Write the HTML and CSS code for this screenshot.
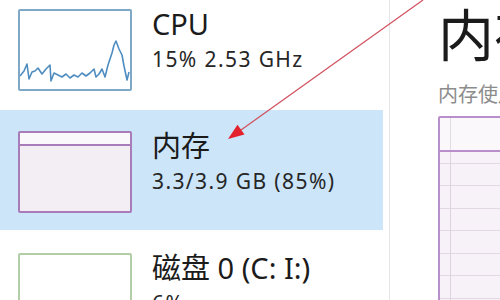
FILE: index.html
```html
<!DOCTYPE html>
<html lang="zh-CN">
<head>
    <meta charset="UTF-8">
    <meta name="viewport" content="width=device-width, initial-scale=1.0">
    <title>任务管理器 - 内存</title>
    <link rel="stylesheet" href="styles.css">
</head>
<body>
    <div class="app">
        <aside class="sidebar">
            <div class="item">
                <div class="thumb thumb-cpu">
                    <svg viewBox="0 0 110 78" width="110" height="78">
                        <polyline class="cpu-line" points="0,65 4,60 7,53 9,68 12,61 15,60 18,57 22,63 26,58 30,54 31,70 34,62 38,64 42,66 46,63 50,67 54,64 58,66 62,62 66,65 70,62 74,58 76,66 79,63 82,58 85,66 88,54 92,42 94,34 96,30 99,38 102,44 104,55 107,69 109,61"/>
                    </svg>
                </div>
                <div class="info">
                    <div class="name">CPU</div>
                    <div class="stat">15% 2.53 GHz</div>
                </div>
            </div>
            <div class="item selected">
                <div class="thumb thumb-mem">
                    <div class="mem-band"></div>
                </div>
                <div class="info">
                    <div class="name">内存</div>
                    <div class="stat">3.3/3.9 GB (85%)</div>
                </div>
            </div>
            <div class="item">
                <div class="thumb thumb-disk"></div>
                <div class="info">
                    <div class="name">磁盘 0 (C: I:)</div>
                    <div class="stat">6%</div>
                </div>
            </div>
        </aside>
        <div class="divider"></div>
        <main class="detail">
            <h1 class="title">内存</h1>
            <div class="caption">内存使用量</div>
            <div class="chart">
                <div class="chart-head"></div>
                <div class="chart-grid"></div>
            </div>
        </main>
    </div>

    <!-- annotation arrow drawn over the screenshot -->
    <svg class="arrow" width="500" height="300" viewBox="0 0 500 300">
        <line x1="423" y1="0" x2="241" y2="130" class="arrow-line"/>
        <polygon points="228,139 244.5,134.6 237.5,124.8" class="arrow-head"/>
    </svg>
</body>
</html>
```

FILE: styles.css
```css
body {
    margin: 0;
    width: 500px;
    height: 300px;
    overflow: hidden;
    background-color: #ffffff;
    color: #1b1b1b;
    font-family: "Noto Sans", "Noto Sans CJK SC", sans-serif;
    position: relative;
}
.app {
    display: flex;
    height: 300px;
}
.sidebar {
    width: 383px;
    flex: none;
    display: flex;
    flex-direction: column;
    gap: 2px;
    margin-top: -12px;
}
.item {
    height: 120px;
    flex: none;
    display: flex;
    gap: 20px;
    padding-left: 18px;
}
.item.selected {
    background-color: #cce5f8;
}
.thumb {
    width: 114px;
    height: 82px;
    box-sizing: border-box;
    margin-top: 21px;
    border: 2px solid #7ea8c6;
    border-radius: 2px;
    background-color: #ffffff;
}
.thumb svg {
    display: block;
}
.cpu-line {
    fill: none;
    stroke: #4f8dc0;
    stroke-width: 1.6;
    stroke-linejoin: round;
}
.thumb-mem {
    border-color: #a77cb9;
    background-color: #f3eef4;
}
.mem-band {
    height: 11px;
    background-color: #fbf8fb;
    border-bottom: 2px solid #a77cb9;
}
.thumb-disk {
    border-color: #b2cea4;
}
.info {
    padding-top: 18px;
}
.name {
    font-size: 29px;
    line-height: 36px;
}
.stat {
    font-size: 21px;
    line-height: 28px;
    margin-top: 3px;
    letter-spacing: 1.4px;
    color: #262626;
}
.divider {
    width: 1px;
    flex: none;
    margin-left: 6px;
    background-color: #e6e6e6;
}
.detail {
    flex: 1;
    min-width: 0;
    padding-left: 48px;
    white-space: nowrap;
}
.title {
    margin: 1px 0 0;
    font-size: 56px;
    font-weight: normal;
    line-height: 62px;
    font-family: "Noto Sans CJK SC", sans-serif;
}
.caption {
    margin-top: 20px;
    font-size: 20px;
    line-height: 22px;
    color: #8c8c8c;
    font-family: "Noto Sans CJK SC", sans-serif;
}
.chart {
    margin-top: 11px;
    width: 120px;
    height: 220px;
    box-sizing: border-box;
    border: 2px solid #b98fcb;
    border-radius: 2px;
    background-color: #f6f2f7;
}
.chart-head {
    height: 32px;
    background-color: #faf8fb;
    border-bottom: 2px solid #b98fcb;
    background-image: linear-gradient(#e3dbe6, #e3dbe6);
    background-size: 1px 100%;
    background-position: 10px 0;
    background-repeat: no-repeat;
}
.chart-grid {
    height: 180px;
    background-image:
        linear-gradient(#ddd3e1, #ddd3e1),
        repeating-linear-gradient(to bottom, transparent 0, transparent 11px, #e2d9e5 11px, #e2d9e5 12px, transparent 12px, transparent 22.5px);
    background-size: 1px 100%, 100% 100%;
    background-position: 10px 0, 0 0;
    background-repeat: no-repeat, repeat;
}
.arrow {
    position: absolute;
    left: 0;
    top: 0;
    pointer-events: none;
}
.arrow-line {
    stroke: #d2505e;
    stroke-width: 1.2;
}
.arrow-head {
    fill: #e3222e;
}
```
